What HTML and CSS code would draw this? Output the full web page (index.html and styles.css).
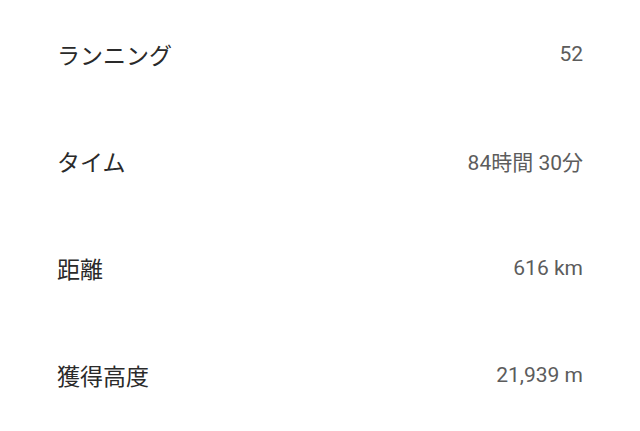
FILE: index.html
```html
<!DOCTYPE html>
<html lang="ja">
<head>
<meta charset="utf-8">
<link rel="stylesheet" href="styles.css">
</head>
<body>
<div class="list">
  <div class="row"><span class="label">ランニング</span><span class="value">52</span></div>
  <div class="row"><span class="label">タイム</span><span class="value">84時間 30分</span></div>
  <div class="row"><span class="label">距離</span><span class="value">616 km</span></div>
  <div class="row"><span class="label">獲得高度</span><span class="value">21,939 m</span></div>
</div>
</body>
</html>
```
FILE: styles.css
```css
html, body {
  margin: 0;
  padding: 0;
  background: #ffffff;
}
.list {
  display: flex;
  flex-direction: column;
  padding: 0 57px;
}
.row {
  height: 107px;
  display: flex;
  align-items: center;
  justify-content: space-between;
}
.label {
  font-family: Roboto, "Noto Sans CJK JP", sans-serif;
  font-size: 23px;
  color: #2a2a2a;
}
.value {
  font-family: Roboto, "Noto Sans CJK JP", sans-serif;
  font-size: 21px;
  color: #5c5c5c;
}
```
